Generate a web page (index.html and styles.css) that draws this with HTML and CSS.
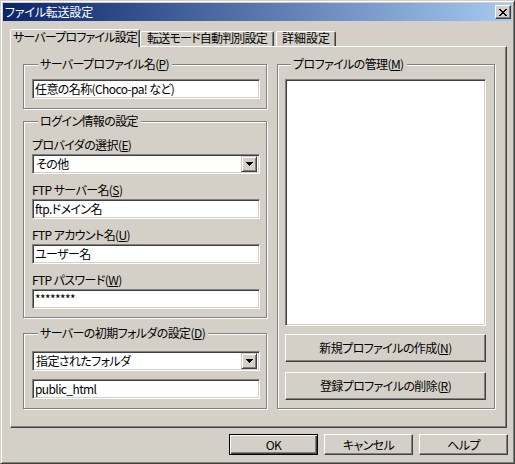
FILE: index.html
```html
<!DOCTYPE html>
<html lang="ja">
<head>
<meta charset="utf-8">
<title>ファイル転送設定</title>
<link rel="stylesheet" href="styles.css">
</head>
<body>
<div class="window">
  <div class="titlebar">
    <span class="title">ファイル転送設定</span>
    <span class="close"><svg width="8" height="7" viewBox="0 0 8 7" shape-rendering="crispEdges"><path d="M0 0h2v1H0z M6 0h2v1H6z M1 1h2v1H1z M5 1h2v1H5z M2 2h4v1H2z M3 3h2v1H3z M2 4h4v1H2z M1 5h2v1H1z M5 5h2v1H5z M0 6h2v1H0z M6 6h2v1H6z" fill="#000"/></svg></span>
  </div>
  <div class="tabs">
    <div class="tab active tab1">サーバープロファイル設定</div>
    <div class="tab tab2">転送モード自動判別設定</div>
    <div class="tab tab3">詳細設定</div>
  </div>
  <div class="panel">
    <div class="col-left">
      <div class="group g1">
        <div class="legend">サーバープロファイル名(<u>P</u>)</div>
        <input class="edit" type="text" value="任意の名称(Choco-pa! など)">
      </div>
      <div class="group g2">
        <div class="legend">ログイン情報の設定</div>
        <div class="label">プロバイダの選択(<u>E</u>)</div>
        <div class="combo"><span class="combo-text">その他</span><span class="combo-btn"><svg width="7" height="4" viewBox="0 0 7 4" shape-rendering="crispEdges"><path d="M0 0h7v1H0z M1 1h5v1H1z M2 2h3v1H2z M3 3h1v1H3z" fill="#000"/></svg></span></div>
        <div class="label">FTP サーバー名(<u>S</u>)</div>
        <input class="edit" type="text" value="ftp.ドメイン名">
        <div class="label">FTP アカウント名(<u>U</u>)</div>
        <input class="edit" type="text" value="ユーザー名">
        <div class="label">FTP パスワード(<u>W</u>)</div>
        <input class="edit" type="text" value="********">
      </div>
      <div class="group g3">
        <div class="legend">サーバーの初期フォルダの設定(<u>D</u>)</div>
        <div class="combo"><span class="combo-text">指定されたフォルダ</span><span class="combo-btn"><svg width="7" height="4" viewBox="0 0 7 4" shape-rendering="crispEdges"><path d="M0 0h7v1H0z M1 1h5v1H1z M2 2h3v1H2z M3 3h1v1H3z" fill="#000"/></svg></span></div>
        <input class="edit edit-gap" type="text" value="public_html">
      </div>
    </div>
    <div class="group gright">
      <div class="legend">プロファイルの管理(<u>M</u>)</div>
      <div class="listbox"></div>
      <button class="btn big first" type="button">新規プロファイルの作成(<u>N</u>)</button>
      <button class="btn big second" type="button">登録プロファイルの削除(<u>R</u>)</button>
    </div>
  </div>
  <div class="actions">
    <button class="btn dlg default" type="button">OK</button>
    <button class="btn dlg" type="button">キャンセル</button>
    <button class="btn dlg" type="button">ヘルプ</button>
  </div>
</div>
</body>
</html>
```

FILE: styles.css
```css
* { box-sizing: border-box; }

body {
  margin: 0;
  background: #d4d0c8;
  font-family: "MS UI Gothic", "Noto Sans CJK JP", sans-serif;
  font-size: 12px;
  font-feature-settings: "palt";
  letter-spacing: -0.6px;
  color: #000;
}

u { text-decoration: underline; text-underline-offset: 1px; }

.window {
  width: 515px;
  height: 464px;
  background: #d4d0c8;
  border: 1px solid;
  border-color: #d4d0c8 #404040 #404040 #d4d0c8;
  box-shadow: inset 1px 1px #fff, inset -1px -1px #808080;
  padding: 2px;
  display: flex;
  flex-direction: column;
}

.titlebar {
  height: 18px;
  flex: none;
  background: linear-gradient(to right, #0a246a, #a6caf0);
  display: flex;
  align-items: center;
  justify-content: space-between;
  padding: 0 1px 0 2px;
  color: #fff;
}

.title { line-height: 12px; letter-spacing: -0.2px; }

.close {
  width: 16px;
  height: 14px;
  background: #d4d0c8;
  border: 1px solid;
  border-color: #fff #404040 #404040 #fff;
  box-shadow: inset -1px -1px #808080;
  display: flex;
  align-items: center;
  justify-content: center;
}
.close svg { display: block; }

.tabs {
  display: flex;
  align-items: flex-end;
  height: 18px;
  margin: 8px 0 -1px 7px;
  flex: none;
}

.tab {
  height: 15px;
  margin-bottom: 1px;
  background: #d4d0c8;
  border: 1px solid;
  border-bottom: none;
  border-color: #fff #404040 transparent #fff;
  box-shadow: inset -1px 0 #808080;
  border-radius: 2px 2px 0 0;
  text-align: center;
  line-height: 12px;
  white-space: nowrap;
  letter-spacing: -0.8px;
}
.tab.active {
  height: 18px;
  margin-bottom: 0;
  padding-top: 1px;
  position: relative;
  z-index: 1;
}
.tab1 { width: 130px; }
.tab2 { width: 134px; }
.tab3 { width: 60px; margin-left: 2px; letter-spacing: 0; }

.panel {
  flex: none;
  width: 497px;
  height: 382px;
  margin-left: 7px;
  border: 1px solid;
  border-color: #fff #404040 #404040 #fff;
  box-shadow: inset -1px -1px #808080;
  padding: 17px 11px 0 12px;
  display: flex;
  gap: 10px;
  align-items: flex-start;
}

.col-left {
  width: 244px;
  display: flex;
  flex-direction: column;
}

.group {
  --pt: 14px;
  border: 1px solid #808080;
  box-shadow: inset 1px 1px #fff, 1px 1px #fff;
  display: flex;
  flex-direction: column;
}

.legend {
  align-self: flex-start;
  height: 12px;
  line-height: 12px;
  margin: -7px 0 calc(var(--pt) - 5px) 6px;
  padding: 0 3px 0 2px;
  background: #d4d0c8;
  white-space: nowrap;
}

.g1 { padding: 0 6px 9px 8px; }
.g2 { --pt: 17px; margin-top: 12px; padding: 0 6px 8px 8px; }
.g3 { --pt: 17px; margin-top: 15px; padding: 0 6px 9px 8px; }
.gright { width: 218px; height: 345px; padding: 0 8px 8px 7px; }

.label {
  height: 12px;
  line-height: 12px;
  margin-bottom: 3px;
  white-space: nowrap;
}
.combo + .label,
.edit + .label { margin-top: 10px; }

.edit,
.combo,
.listbox {
  border: 1px solid;
  border-color: #808080 #fff #fff #808080;
  box-shadow: inset 1px 1px #404040, inset -1px -1px #d4d0c8;
  background: #fff;
}

.edit {
  display: block;
  width: 100%;
  height: 20px;
  margin: 0;
  padding: 0 0 1px 2px;
  font: inherit;
  font-feature-settings: "palt";
  letter-spacing: inherit;
  color: #000;
  outline: none;
}
.edit-gap { margin-top: 8px; }

.combo {
  height: 20px;
  padding: 2px;
  display: flex;
  align-items: center;
}
.combo-text {
  flex: 1;
  padding-left: 1px;
  line-height: 12px;
  white-space: nowrap;
}
.combo-btn {
  width: 16px;
  height: 16px;
  background: #d4d0c8;
  border: 1px solid;
  border-color: #d4d0c8 #404040 #404040 #d4d0c8;
  box-shadow: inset 1px 1px #fff, inset -1px -1px #808080;
  display: flex;
  align-items: center;
  justify-content: center;
}
.combo-btn svg { display: block; }

.listbox {
  height: 247px;
  width: 100%;
}

.btn {
  font: inherit;
  font-feature-settings: "palt";
  letter-spacing: inherit;
  color: #000;
  background: #d4d0c8;
  border: 1px solid;
  border-color: #fff #404040 #404040 #fff;
  box-shadow: inset -1px -1px #808080;
  padding: 0;
  margin: 0;
  line-height: 12px;
  white-space: nowrap;
}

.big { width: 100%; height: 28px; }
.big.first { margin-top: 8px; }
.big.second { margin-top: 10px; }

.actions {
  display: flex;
  justify-content: flex-end;
  gap: 6px;
  margin: 6px 4px 0 0;
}
.dlg { width: 89px; height: 21px; }
.default {
  border-color: #000;
  box-shadow: inset 1px 1px #fff, inset -1px -1px #404040, inset -2px -2px #808080;
}
```
